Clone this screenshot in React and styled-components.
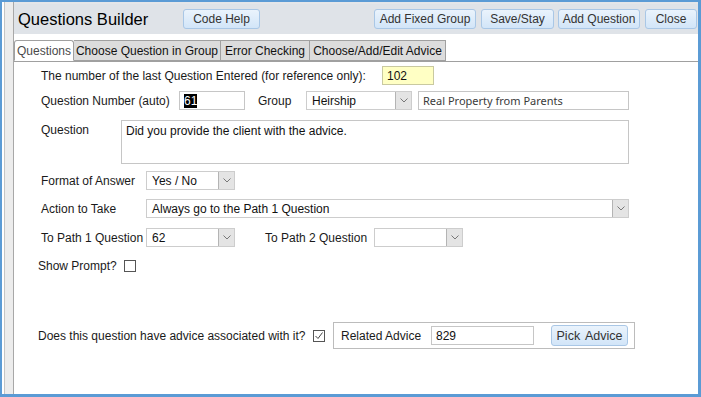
import React from 'react';
import styled, { createGlobalStyle } from 'styled-components';

const GlobalStyle = createGlobalStyle`
  html, body {
    margin: 0;
    padding: 0;
    background: #fff;
  }
  body {
    font-family: 'Liberation Sans', Arial, sans-serif;
    font-size: 12px;
    color: #1a1a1a;
  }
`;

const Frame = styled.div`
  width: 701px;
  height: 397px;
  box-sizing: border-box;
  border: 3px solid #5b9bd5;
  border-left-width: 2px;
  border-top-width: 2px;
  display: flex;
  background: #fff;
  overflow: hidden;
`;

const SideStrip = styled.div`
  width: 8px;
  margin-left: 2px;
  background: #ececec;
  border-left: 1px solid #c4c4c4;
`;

const Panel = styled.div`
  flex: 1;
  display: flex;
  flex-direction: column;
  border-left: 1px solid #a8a8a8;
`;

const TopEdge = styled.div`
  height: 2px;
  background: #e4e6e9;
`;

const Header = styled.div`
  height: 30px;
  background: #dfe3e8;
  display: flex;
  align-items: center;
  padding: 0 1px 0 4px;
`;

const Title = styled.h1`
  margin: 0;
  font-size: 16.5px;
  font-weight: normal;
  color: #000;
  width: 165px;
  flex-shrink: 0;
`;

const HeaderButton = styled.button`
  width: ${(p) => p.$w}px;
  height: 20px;
  padding: 0;
  margin-left: ${(p) => p.$gap ?? 5}px;
  font-family: 'Liberation Sans', Arial, sans-serif;
  font-size: 12px;
  color: #333;
  border: 1px solid #a9c7e6;
  border-radius: 3px;
  background: linear-gradient(#eaf3fc, #d2e5f8);
  cursor: pointer;
  flex-shrink: 0;
`;

const Spacer = styled.div`
  flex: 1;
`;

const Body = styled.div`
  flex: 1;
  padding-top: 6px;
  display: flex;
  flex-direction: column;
`;

const TabBar = styled.div`
  display: flex;
  border-bottom: 1px solid #a0a0a0;
  height: 21px;
  box-sizing: content-box;
`;

const Tab = styled.div`
  width: ${(p) => p.$w}px;
  height: 21px;
  box-sizing: border-box;
  margin-bottom: -1px;
  display: flex;
  align-items: center;
  justify-content: center;
  font-size: 12px;
  border: 1px solid #a0a0a0;
  border-bottom: ${(p) => (p.$active ? '1px solid #fff' : '1px solid #a0a0a0')};
  border-left: ${(p) => (p.$first ? '1px solid #a0a0a0' : 'none')};
  background: ${(p) => (p.$active ? '#fff' : '#dcdcdc')};
  color: ${(p) => (p.$active ? '#4a4a4a' : '#111')};
  border-radius: ${(p) => (p.$active ? '3px 3px 0 0' : '0')};
  white-space: nowrap;
`;

const Form = styled.div`
  padding: 4px 0 0 27px;
  display: flex;
  flex-direction: column;
`;

const Row = styled.div`
  display: flex;
  align-items: ${(p) => (p.$top ? 'flex-start' : 'center')};
  margin-top: ${(p) => p.$mt || 0}px;
  margin-left: ${(p) => p.$ml || 0}px;
  min-height: 19px;
`;

const Label = styled.span`
  width: ${(p) => p.$w}px;
  margin-left: ${(p) => p.$ml || 0}px;
  padding-top: ${(p) => p.$pt || 0}px;
  font-size: 12px;
  color: #1a1a1a;
  white-space: nowrap;
  flex-shrink: 0;
`;

const Box = styled.div`
  width: ${(p) => p.$w}px;
  height: ${(p) => p.$h || 19}px;
  margin-left: ${(p) => p.$ml || 0}px;
  box-sizing: border-box;
  border: 1px solid ${(p) => (p.$yellow ? '#c9c9a0' : '#c6c6c6')};
  background: ${(p) => (p.$yellow ? '#ffffc4' : '#fff')};
  padding: ${(p) => (p.$multi ? '3px 4px' : '0 4px')};
  display: flex;
  align-items: ${(p) => (p.$multi ? 'flex-start' : 'center')};
  font-size: 12px;
  color: #111;
  flex-shrink: 0;
`;

const SoftBox = styled(Box)`
  font-family: 'Noto Sans', 'Open Sans', sans-serif;
  font-size: 11px;
  color: #3a3a3a;
`;

const Selected = styled.span`
  background: #000;
  color: #fff;
`;

const SelectBox = styled.div`
  width: ${(p) => p.$w}px;
  height: 19px;
  margin-left: ${(p) => p.$ml || 0}px;
  box-sizing: border-box;
  border: 1px solid #cdcdcd;
  display: flex;
  align-items: center;
  font-size: 12px;
  color: #111;
  flex-shrink: 0;
`;

const SelectText = styled.span`
  flex: 1;
  padding-left: 5px;
  white-space: nowrap;
  overflow: hidden;
`;

const Arrow = styled.span`
  width: 16px;
  height: 17px;
  box-sizing: border-box;
  background: #e4e4e4;
  border-left: 1px solid #b4b4b4;
  display: flex;
  align-items: center;
  justify-content: center;
`;

const Check = styled.span`
  width: 12px;
  height: 12px;
  margin-left: ${(p) => p.$ml || 0}px;
  box-sizing: border-box;
  border: 1px solid #555;
  background: #fff;
  display: flex;
  align-items: center;
  justify-content: center;
  flex-shrink: 0;
`;

const AdviceGroup = styled.div`
  width: 302px;
  height: 27px;
  margin-left: 8px;
  box-sizing: border-box;
  border: 1px solid #bcbcbc;
  display: flex;
  align-items: center;
  padding-left: 7px;
`;

const PickButton = styled.button`
  width: 77px;
  height: 21px;
  margin-left: 17px;
  font-family: 'Liberation Sans', Arial, sans-serif;
  font-size: 12.5px;
  color: #333;
  word-spacing: 2px;
  border: 1px solid #a9c7e6;
  border-radius: 3px;
  background: linear-gradient(#eaf3fc, #d2e5f8);
  padding: 0;
`;

const Chevron = () => (
  <svg width="8" height="5" viewBox="0 0 8 5">
    <polyline points="0.5,0.5 4,4 7.5,0.5" fill="none" stroke="#777" strokeWidth="1" />
  </svg>
);

const Select = ({ w, ml, value }) => (
  <SelectBox $w={w} $ml={ml}>
    <SelectText>{value}</SelectText>
    <Arrow>
      <Chevron />
    </Arrow>
  </SelectBox>
);

const Tick = () => (
  <svg width="10" height="10" viewBox="0 0 10 10">
    <polyline points="1.5,5 4,7.5 8.5,1.5" fill="none" stroke="#444" strokeWidth="1" />
  </svg>
);

export default function App() {
  return (
    <>
      <GlobalStyle />
      <Frame>
        <SideStrip />
        <Panel>
          <TopEdge />
          <Header>
            <Title>Questions Builder</Title>
            <HeaderButton $w={77} $gap={0}>Code Help</HeaderButton>
            <Spacer />
            <HeaderButton $w={102}>Add Fixed Group</HeaderButton>
            <HeaderButton $w={73}>Save/Stay</HeaderButton>
            <HeaderButton $w={82} $gap={4}>Add Question</HeaderButton>
            <HeaderButton $w={52}>Close</HeaderButton>
          </Header>
          <Body>
            <TabBar>
              <Tab $active $first $w={60}>Questions</Tab>
              <Tab $w={147}>Choose Question in Group</Tab>
              <Tab $w={89}>Error Checking</Tab>
              <Tab $w={136}>Choose/Add/Edit Advice</Tab>
            </TabBar>
            <Form>
              <Row>
                <Label $w={341}>The number of the last Question Entered (for reference only):</Label>
                <Box $w={52} $yellow>102</Box>
              </Row>
              <Row $mt={6}>
                <Label $w={138}>Question Number (auto)</Label>
                <Box $w={66}>
                  <Selected>61</Selected>
                </Box>
                <Label $w={48} $ml={13}>Group</Label>
                <Select w={106} value="Heirship" />
                <SoftBox $w={211} $ml={6}>Real Property from Parents</SoftBox>
              </Row>
              <Row $mt={10} $top>
                <Label $w={80} $pt={3}>Question</Label>
                <Box $w={508} $h={44} $multi>Did you provide the client with the advice.</Box>
              </Row>
              <Row $mt={7}>
                <Label $w={105}>Format of Answer</Label>
                <Select w={89} value="Yes / No" />
              </Row>
              <Row $mt={9}>
                <Label $w={105}>Action to Take</Label>
                <Select w={483} value="Always go to the Path 1 Question" />
              </Row>
              <Row $mt={10}>
                <Label $w={105}>To Path 1 Question</Label>
                <Select w={89} value="62" />
                <Label $w={109} $ml={30}>To Path 2 Question</Label>
                <Select w={89} value="" />
              </Row>
              <Row $mt={9} $ml={-3}>
                <Label $w={86}>Show Prompt?</Label>
                <Check />
              </Row>
              <Row $mt={47} $ml={-3}>
                <Label $w={275}>Does this question have advice associated with it?</Label>
                <Check>
                  <Tick />
                </Check>
                <AdviceGroup>
                  <Label $w={90}>Related Advice</Label>
                  <Box $w={103}>829</Box>
                  <PickButton>Pick Advice</PickButton>
                </AdviceGroup>
              </Row>
            </Form>
          </Body>
        </Panel>
      </Frame>
    </>
  );
}
